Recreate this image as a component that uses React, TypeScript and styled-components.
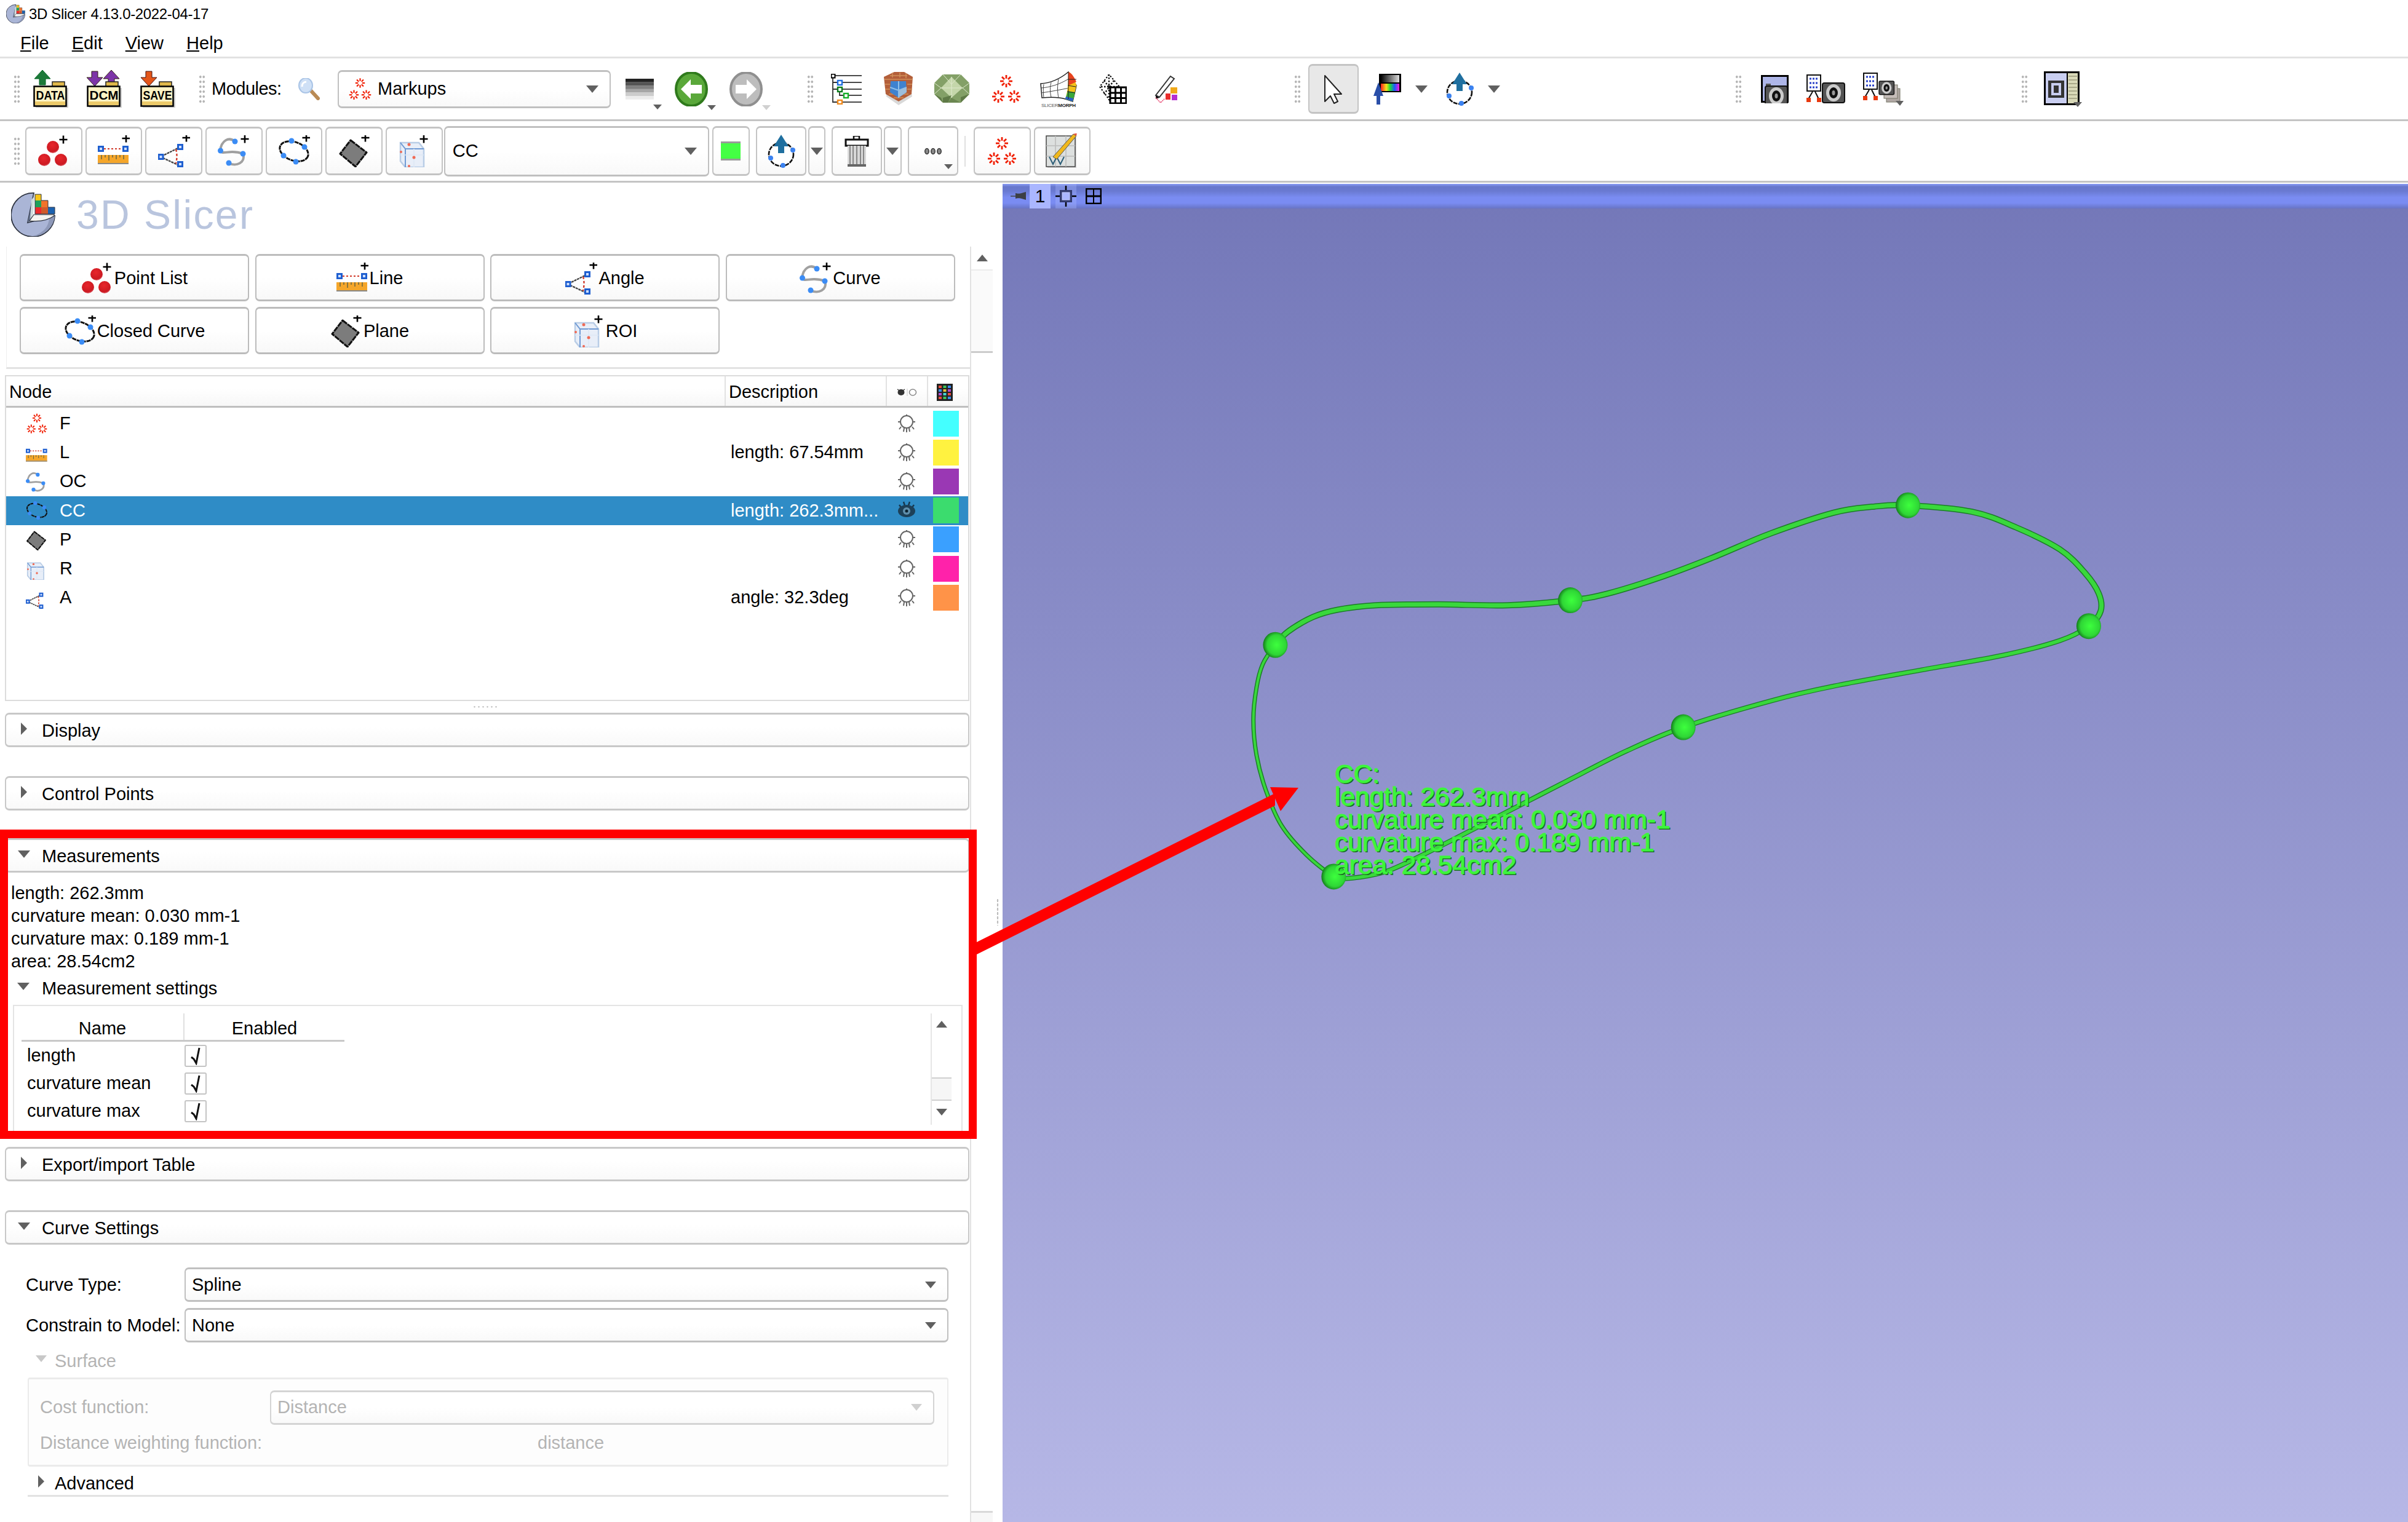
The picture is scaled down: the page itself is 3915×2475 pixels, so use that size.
import React from "react";
import styled, { createGlobalStyle } from "styled-components";

const GlobalStyle = createGlobalStyle`
  html, body { margin: 0; padding: 0; background: #fff; }
  * { box-sizing: border-box; }
  body { font-family: "Liberation Sans", Arial, sans-serif; font-size: 29px; color: #000; }
`;

const Page = styled.div`
  position: relative;
  width: 3915px;
  height: 2475px;
  overflow: hidden;
  display: flex;
  flex-direction: column;
  background: #fff;
`;

const TitleBar = styled.div`
  height: 45px;
  padding-left: 10px;
  display: flex;
  align-items: center;
  gap: 6px;
  font-size: 24px;
  letter-spacing: -0.35px;
`;

const MenuBar = styled.div`
  height: 50px;
  padding: 3px 0 0 33px;
  display: flex;
  align-items: center;
  gap: 37px;
  border-bottom: 3px solid #e2e2e2;
`;

const Toolbar = styled.div<{ $h: number }>`
  height: ${(p) => p.$h}px;
  flex: none;
  padding-left: 22px;
  display: flex;
  align-items: center;
  border-bottom: 3px solid #c4c4c4;
`;

const Grip = styled.div<{ $ml?: number }>`
  width: 11px;
  height: 48px;
  flex: none;
  margin-left: ${(p) => p.$ml ?? 0}px;
  background-image: radial-gradient(#b4b4b4 1.4px, transparent 1.8px);
  background-size: 5.5px 8px;
`;

const Slot = styled.div<{ $ml?: number }>`
  position: relative;
  flex: none;
  display: flex;
  align-items: center;
  margin-left: ${(p) => p.$ml ?? 0}px;
`;

const ModulesLabel = styled.span`
  width: 112px;
  margin-left: 10px;
  flex: none;
  white-space: nowrap;
  letter-spacing: -0.5px;
`;

const Tri = styled.span<{ $dir?: "down" | "right"; $color?: string; $size?: number }>`
  display: inline-block;
  flex: none;
  width: 0;
  height: 0;
  ${(p) => {
    const s = p.$size ?? 10;
    const c = p.$color ?? "#606060";
    return p.$dir === "right"
      ? `border-top: ${s}px solid transparent; border-bottom: ${s}px solid transparent; border-left: ${s}px solid ${c};`
      : `border-left: ${s}px solid transparent; border-right: ${s}px solid transparent; border-top: ${Math.round(s * 1.2)}px solid ${c};`;
  }}
`;

const CornerTri = styled(Tri)<{ $low?: number }>`
  position: absolute;
  right: -13px;
  bottom: ${(p) => -(p.$low ?? 6)}px;
`;

const Combo = styled.div<{ $w?: number; $h?: number; $off?: boolean; $ml?: number; $pad?: number }>`
  flex: none;
  width: ${(p) => (p.$w ? `${p.$w}px` : "100%")};
  height: ${(p) => p.$h ?? 56}px;
  margin-left: ${(p) => p.$ml ?? 0}px;
  padding: 0 18px 0 ${(p) => p.$pad ?? 10}px;
  display: flex;
  align-items: center;
  justify-content: space-between;
  border: 2px solid ${(p) => (p.$off ? "#d4d4d4" : "#c0c0c0")};
  border-top-width: 3px;
  border-bottom-width: 3px;
  border-radius: 7px;
  background: linear-gradient(#fff 50%, #f9f9f9);
  color: ${(p) => (p.$off ? "#b4b4b4" : "#000")};
`;

const ComboValue = styled.span`
  display: flex;
  align-items: center;
  gap: 10px;
`;

const ToolButton = styled.div<{ $w?: number; $h?: number; $ml?: number; $on?: boolean }>`
  position: relative;
  flex: none;
  width: ${(p) => p.$w ?? 92.7}px;
  height: ${(p) => p.$h ?? 79}px;
  margin-left: ${(p) => p.$ml ?? 5}px;
  display: flex;
  align-items: center;
  justify-content: center;
  border: 2px solid #c4c4c4;
  border-top-width: 3px;
  border-bottom-width: 3px;
  border-radius: 7px;
  background: ${(p) => (p.$on ? "#e8e8e8" : "linear-gradient(#fff 50%, #f8f8f8)")};
`;

const ButtonCornerTri = styled(Tri)`
  position: absolute;
  right: 7px;
  bottom: 8px;
`;

const ColorChip = styled.div`
  width: 32px;
  height: 31px;
  background: #44ff44;
  border-top: 3px solid #999;
  border-bottom: 3px solid #999;
`;

const Separator = styled.div`
  width: 2px;
  height: 50px;
  margin-left: 10px;
  flex: none;
  background: #e0e0e0;
`;

const Body = styled.div`
  flex: 1;
  display: flex;
  min-height: 0;
`;

const Panel = styled.div`
  width: 1630px;
  flex: none;
  display: flex;
  flex-direction: column;
`;

const LogoRow = styled.div`
  height: 104px;
  flex: none;
  padding: 0 0 0 18px;
  display: flex;
  align-items: center;
  gap: 34px;
  color: #b9c5de;
  font-size: 66px;
  letter-spacing: 2.4px;
`;

const ScrollWrap = styled.div`
  flex: 1;
  display: flex;
  min-height: 0;
`;

const PanelContent = styled.div`
  width: 1579px;
  flex: none;
  border-right: 2px solid #e2e2e2;
`;

const ButtonBox = styled.div`
  margin-left: 10px;
  padding: 12px 0 21px 21px;
  display: grid;
  grid-template-columns: repeat(4, 373px);
  grid-auto-rows: 77px;
  gap: 9px 9.5px;
  border-left: 1px solid #eee;
  border-bottom: 3px solid #e2e2e2;
`;

const CreateButton = styled.div`
  display: flex;
  align-items: center;
  justify-content: center;
  gap: 2px;
  white-space: nowrap;
  padding-top: 2px;
  border: 2px solid #bcbcbc;
  border-top-width: 3px;
  border-bottom-width: 3px;
  border-radius: 7px;
  background: linear-gradient(#fff 50%, #f8f8f8);
`;

const Tree = styled.div`
  margin: 10px 0 0 8px;
  width: 1568px;
  height: 530px;
  border: 2px solid #dcdcdc;
`;

const TreeHead = styled.div`
  height: 51px;
  margin-bottom: 2px;
  display: grid;
  grid-template-columns: 1168px 262px 67px 1fr;
  border-bottom: 3px solid #bfbfbf;
  background: linear-gradient(#fff 40%, #f7f7f7);
`;

const HeadCell = styled.div<{ $center?: boolean; $pr?: number }>`
  display: flex;
  align-items: center;
  padding-top: 3px;
  padding-left: ${(p) => (p.$center ? 0 : 5)}px;
  padding-right: ${(p) => p.$pr ?? 0}px;
  justify-content: ${(p) => (p.$center ? "center" : "flex-start")};
  & + & { border-left: 2px solid #e2e2e2; }
`;

const NodeRow = styled.div<{ $on?: boolean }>`
  height: 47.2px;
  display: grid;
  grid-template-columns: 1168px 262px 67px 1fr;
  align-items: center;
  background: ${(p) => (p.$on ? "#2f8cc6" : "transparent")};
  color: ${(p) => (p.$on ? "#fff" : "#000")};
`;

const NodeName = styled.div`
  padding-left: 30px;
  display: flex;
  align-items: center;
  gap: 17px;
`;

const NodeIcon = styled.span`
  width: 40px;
  height: 40px;
  display: flex;
  align-items: center;
  justify-content: center;
`;

const NodeDesc = styled.div`
  padding-left: 10px;
  white-space: nowrap;
`;

const EyeCell = styled.div`
  display: flex;
  justify-content: center;
`;

const Swatch = styled.div<{ $color: string }>`
  width: 42px;
  height: 42px;
  margin-left: 10px;
  background: ${(p) => p.$color};
`;

const SplitHandle = styled.div`
  height: 19px;
  display: flex;
  justify-content: center;
  align-items: center;
  &::after {
    content: "";
    width: 42px;
    height: 5px;
    background-image: radial-gradient(#b4b4b4 1.2px, transparent 1.6px);
    background-size: 7px 5px;
  }
`;

const SectionHead = styled.div<{ $mt?: number; $h?: number }>`
  width: 1568px;
  height: ${(p) => p.$h ?? 56}px;
  margin: ${(p) => p.$mt ?? 0}px 0 0 8px;
  padding-top: 3px;
  display: flex;
  align-items: center;
  border: 2px solid #c8c8c8;
  border-top-width: 3px;
  border-bottom-width: 3px;
  border-radius: 7px;
  background: linear-gradient(#fff 40%, #f9f9f9);
`;

const ArrowSlot = styled.span<{ $w?: number }>`
  width: ${(p) => p.$w ?? 58}px;
  padding-bottom: 7px;
  flex: none;
  display: flex;
  justify-content: center;
`;

const MeasureBody = styled.div`
  height: 446px;
`;

const MeasureLines = styled.div`
  padding: 15px 0 0 18px;
  line-height: 37px;
`;

const SubHead = styled.div<{ $ml?: number; $w?: number; $off?: boolean; $mt?: number }>`
  height: 40px;
  margin: ${(p) => p.$mt ?? 5}px 0 0 ${(p) => p.$ml ?? 8}px;
  width: ${(p) => (p.$w ? `${p.$w}px` : "auto")};
  display: flex;
  align-items: center;
  color: ${(p) => (p.$off ? "#b4b4b4" : "#000")};
`;

const SettingsBox = styled.div`
  margin: 7px 0 0 21px;
  width: 1544px;
  height: 215px;
  padding: 12px 16px 0 12px;
  display: flex;
  justify-content: space-between;
  border: 2px solid #e4e4e4;
  border-bottom: none;
`;

const Table = styled.div`
  width: 525px;
`;

const TableHead = styled.div`
  height: 46px;
  display: grid;
  grid-template-columns: 263px 262px;
  border-bottom: 3px solid #c8c8c8;
`;

const TableHeadCell = styled.span`
  display: flex;
  align-items: center;
  justify-content: center;
  padding-top: 6px;
  & + & { border-left: 2px solid #e0e0e0; }
`;

const TableRow = styled.div`
  height: 45px;
  display: grid;
  grid-template-columns: 256px 1fr;
  align-items: center;
  padding-left: 9px;
`;

const CheckBox = styled.span`
  width: 36px;
  height: 36px;
  display: flex;
  align-items: center;
  justify-content: center;
  border: 2px solid #c4c4c4;
  border-radius: 3px;
  background: #fff;
`;

const MiniBar = styled.div`
  width: 34px;
  height: 181px;
  display: flex;
  flex-direction: column;
  align-items: center;
  border-left: 2px solid #e6e6e6;
`;

const BarButton = styled.div<{ $h: number }>`
  height: ${(p) => p.$h}px;
  width: 100%;
  flex: none;
  display: flex;
  align-items: center;
  justify-content: center;
`;

const UpTri = styled(Tri)`
  transform: rotate(180deg);
`;

const MiniThumb = styled.div`
  width: 100%;
  height: 38px;
  flex: none;
  background: #f6f6f6;
  border-top: 2px solid #d0d0d0;
  border-bottom: 2px solid #d0d0d0;
`;

const FormGrid = styled.div<{ $mt: number; $ml: number; $col: number; $w: number }>`
  margin: ${(p) => p.$mt}px 0 0 ${(p) => p.$ml}px;
  width: ${(p) => p.$w}px;
  display: grid;
  grid-template-columns: ${(p) => p.$col}px 1fr;
  align-items: center;
  gap: 10px 0;
  white-space: nowrap;
`;

const SurfaceBox = styled.div`
  margin: 7px 0 0 45px;
  width: 1497px;
  height: 145px;
  padding-top: 18px;
  border: 2px solid #ebebeb;
  border-top-width: 3px;
  border-bottom-width: 3px;
  border-radius: 4px;
  background: #fdfdfd;
  color: #b4b4b4;
`;

const SurfaceRow = styled.div<{ $h?: number }>`
  height: ${(p) => p.$h ?? 55}px;
  padding-left: 18px;
  display: flex;
  align-items: center;
  white-space: nowrap;
`;

const SurfaceLabel = styled.span`
  width: 374px;
  flex: none;
`;

const WeightLabel = styled.span`
  width: 809px;
  flex: none;
`;

const AdvancedRow = styled(SubHead)`
  border-bottom: 3px solid #e2e2e2;
  margin-top: 9px;
`;

const MainBar = styled.div`
  width: 35px;
  flex: none;
  display: flex;
  flex-direction: column;
`;

const MainThumb = styled.div`
  height: 136px;
  flex: none;
  background: #fafafa;
  border-top: 2px solid #ececec;
  border-bottom: 3px solid #cccccc;
`;

const MainBarGap = styled.div`
  flex: 1;
`;

const MainBarEnd = styled.div`
  height: 18px;
  flex: none;
  background: #f7f7f7;
  border-top: 3px solid #d8d8d8;
`;

const SplitStrip = styled.div`
  flex: 1;
  padding-top: 90px;
  display: flex;
  justify-content: center;
  align-items: center;
  &::after {
    content: "";
    width: 4px;
    height: 44px;
    background-image: radial-gradient(#bdbdbd 1.2px, transparent 1.6px);
    background-size: 4px 7px;
  }
`;

const Viewer = styled.div`
  position: relative;
  flex: 1;
  margin-top: 2px;
  display: flex;
  flex-direction: column;
  background: linear-gradient(#7377b8 0%, #b6b7e6 100%);
`;

const ViewerBar = styled.div`
  height: 40px;
  flex: none;
  display: flex;
  align-items: stretch;
  padding-left: 8px;
  background: linear-gradient(#8b9cf6 0, #6777cb 12%, #6a7ad2 30%, #7a8cf2 55%, #7a8cf2 78%, #6874c4 100%);
`;

const PinBox = styled.div`
  width: 36px;
  display: flex;
  align-items: center;
  justify-content: center;
`;

const ViewNumber = styled.div`
  width: 34px;
  display: flex;
  align-items: center;
  justify-content: center;
  background: #aab6ff;
  font-size: 30px;
`;

const ViewIcon = styled.div<{ $ml: number; $w: number; $tint?: boolean }>`
  width: ${(p) => p.$w}px;
  margin-left: ${(p) => p.$ml}px;
  display: flex;
  align-items: center;
  justify-content: center;
  background: ${(p) => (p.$tint ? "rgba(170, 182, 255, 0.35)" : "transparent")};
`;

const SceneLayer = styled.svg`
  position: absolute;
  left: 0;
  top: 0;
`;

const SceneLabel = styled.div`
  position: absolute;
  left: 540px;
  top: 941px;
  font-size: 42.5px;
  line-height: 37px;
  white-space: nowrap;
  color: #3cf53c;
  -webkit-text-stroke: 1.2px #3cf53c;
  text-shadow: 2px 2px 0 #1c6a22;
`;

const Callout = styled.div`
  position: absolute;
  left: 0;
  top: 1349px;
  width: 1588px;
  height: 503px;
  border: solid #ff0000;
  border-width: 14px 13px 13px 13px;
`;

const CalloutArrow = styled.svg`
  position: absolute;
  left: 0;
  top: 0;
  pointer-events: none;
`;

/* ---------- drawings ---------- */

const FONT = "Liberation Sans, Arial, sans-serif";

function arrowPts(cx: number, y0: number, y1: number, up: boolean, hw = 13, sw = 5) {
  const h = 14;
  return up
    ? `${cx},${y0} ${cx + hw},${y0 + h} ${cx + sw},${y0 + h} ${cx + sw},${y1} ${cx - sw},${y1} ${cx - sw},${y0 + h} ${cx - hw},${y0 + h}`
    : `${cx},${y1} ${cx + hw},${y1 - h} ${cx + sw},${y1 - h} ${cx + sw},${y0} ${cx - sw},${y0} ${cx - sw},${y1 - h} ${cx - hw},${y1 - h}`;
}

function Folder({ label, children }: { label: string; children: React.ReactNode }) {
  return (
    <svg width="58" height="62" viewBox="0 0 58 62">
      {children}
      <rect x="31" y="19" width="20" height="9" fill="#e0b84a" stroke="#222" strokeWidth="1.5" />
      <rect x="4" y="29" width="53" height="32" fill="#000" opacity=".2" />
      <rect x="1.5" y="26.5" width="52" height="32" fill="#fdf3c4" stroke="#000" strokeWidth="2.5" />
      <rect x="3" y="51" width="49" height="6" fill="#ecca6a" />
      <text x="28" y="48" textAnchor="middle" fontFamily={FONT} fontSize="20.5" fontWeight="700" textLength="47" lengthAdjust="spacingAndGlyphs">{label}</text>
    </svg>
  );
}

const Magnifier = () => (
  <svg width="36" height="36" viewBox="0 0 36 36">
    <path d="M21 21l11 12" stroke="#b98a55" strokeWidth="6" strokeLinecap="round" />
    <ellipse cx="12" cy="12" rx="11" ry="12" fill="#cfe0f6" stroke="#a9c4e6" strokeWidth="2" />
    <path d="M6 14c0-5 3-8 7-8" stroke="#fff" strokeWidth="3" fill="none" />
  </svg>
);

function Burst({ x, y, r }: { x: number; y: number; r: number }) {
  const spokes = [0, 45, 90, 135, 180, 225, 270, 315];
  return (
    <g stroke="#f01c00" strokeWidth={r / 3.6}>
      {spokes.map((a) => {
        const c = Math.cos((a * Math.PI) / 180);
        const s = Math.sin((a * Math.PI) / 180);
        return <line key={a} x1={x + c * r * 0.42} y1={y + s * r * 0.42} x2={x + c * r} y2={y + s * r} />;
      })}
    </g>
  );
}

function Fiducials({ w = 48, h = 48 }: { w?: number; h?: number }) {
  return (
    <svg width={w} height={h} viewBox="0 0 48 48">
      <Burst x={24} y={11} r={10} />
      <Burst x={11} y={36} r={10} />
      <Burst x={37} y={36} r={10} />
    </svg>
  );
}

const Gradient = () => (
  <svg width="46" height="34" viewBox="0 0 46 34">
    {["#222", "#555", "#808080", "#a6a6a6", "#cccccc", "#ececec"].map((c, i) => (
      <rect key={c} x="0" y={i * 5.6} width="46" height="5.7" fill={c} />
    ))}
  </svg>
);

function NavArrow({ back, on }: { back?: boolean; on?: boolean }) {
  const a = on ? "#5aa83a" : "#bdbdbd";
  const b = on ? "#2f7a1c" : "#8f8f8f";
  return (
    <svg width="54" height="56" viewBox="0 0 54 56">
      <ellipse cx="27" cy="28" rx="25" ry="27" fill={a} stroke={b} strokeWidth="4" />
      <polygon
        points={back ? "10,28 26,12 26,21 44,21 44,35 26,35 26,44" : "44,28 28,12 28,21 10,21 10,35 28,35 28,44"}
        fill="#fff"
      />
    </svg>
  );
}

const TreeIcon = () => (
  <svg width="50" height="50" viewBox="0 0 50 50">
    <path d="M3 4v42h11M3 14h11M3 25h11M14 25v10h10" stroke="#333" strokeWidth="1.8" fill="none" />
    <path d="M7 3h43M19 14h31M19 25h31M29 35h21M19 46h31" stroke="#4a4a4a" strokeWidth="2.2" />
    <rect x="0.5" y="0.5" width="6" height="6" fill="#fff" stroke="#000" strokeWidth="2" />
    <rect x="11" y="11" width="7" height="7" fill="#fff" stroke="#1f6fe0" strokeWidth="2.4" />
    <rect x="11" y="22" width="7" height="7" fill="#fff" stroke="#0a7a1a" strokeWidth="2.4" />
    <rect x="21" y="32" width="7" height="7" fill="#fff" stroke="#17b02a" strokeWidth="2.4" />
    <rect x="11" y="43" width="7" height="6" fill="#fff" stroke="#f0891c" strokeWidth="2.4" />
  </svg>
);

const Shield = () => (
  <svg width="49" height="56" viewBox="0 0 49 56">
    <polygon points="6,14 42,14 46,40 24,54 4,40" fill="#000" opacity=".15" />
    <polygon points="17,0 33,0 47,8 45,36 24,48 3,36 0,8" fill="#b35f3a" />
    <path d="M1 12h46M2 20h8M38 20h8M2 28h8M38 28h8M10 6h28M8 36h32M16 42h16M14 1v8M26 1v8M36 2v8" stroke="#d2915a" strokeWidth="1.5" />
    <polygon points="11,15 36,15 37,33 24,42 10,33" fill="#3f82cf" />
    <path d="M24 15v27M10 25l14 5 13-5" stroke="#8fbfe8" strokeWidth="2" fill="none" />
    <polygon points="25,30 37,25 37,33 25,41" fill="#9dbedc" />
  </svg>
);

const Rock = () => (
  <svg width="57" height="47" viewBox="0 0 57 47">
    <polygon points="14,0 43,0 57,14 57,32 43,46 14,46 0,32 0,14" fill="#83a067" />
    <polygon points="28,4 46,22 28,38 11,22" fill="#c4d6aa" />
    <path d="M14 0l14 16L43 0M0 14l11 8L0 32M57 14l-11 8 11 10M28 4v34M11 22h35" stroke="#dfe9cd" strokeWidth="1" fill="none" />
    <polygon points="0,32 11,38 14,46" fill="#5f7a47" />
    <polygon points="14,38 28,34 22,46 14,46" fill="#5f7a47" />
    <polygon points="28,38 43,46 22,46" fill="#6b8751" />
    <polygon points="43,37 57,32 43,46" fill="#5f7a47" />
  </svg>
);

const Morph = () => (
  <svg width="61" height="60" viewBox="0 0 61 60">
    <path d="M1 21C18 20 34 12 46 2L59 24 53 50 41 46C28 42 14 43 3 44z" fill="#fff" stroke="#222" strokeWidth="1.5" />
    <path d="M2 28c14-1 30-6 43-14M2 36c15-2 30-5 46-8M6 44c-1-8-1-16 0-22M18 43c-2-8-2-17 0-24M30 44c-2-10-2-20 0-30" stroke="#444" strokeWidth="1" fill="none" />
    <path d="M46 2c6 2 10 10 13 22L53 50 41 46c4-12 5-26 5-44z" fill="#f5c21a" />
    <path d="M46 2c6 2 10 10 13 16l-13 6V2z" fill="#e8431f" />
    <path d="M45 33l12 2-4 15-12-4z" fill="#3aa83a" />
    <path d="M41 46l12 4 1-5-12-3z" fill="#2a5fc8" />
    <path d="M46 2v44M45 14l14 0M45 24l13 2M44 34l13 2" stroke="#222" strokeWidth="1" fill="none" />
    <text x="30" y="59" textAnchor="middle" fontFamily={FONT} fontSize="8" fill="#555" textLength="56">
      SLICER<tspan fontWeight="700" fill="#222">MORPH</tspan>
    </text>
  </svg>
);

const Mesh = () => (
  <svg width="45" height="48" viewBox="0 0 45 48">
    <path d="M16 0L1 20l16 22 16-22z" fill="#fff" stroke="#000" strokeWidth="2" strokeDasharray="2.5 2.5" />
    <path d="M8 10l17 22M24 10L8 32M3 20h28M16 0v42" stroke="#111" strokeWidth="2.4" strokeDasharray="2.5 2.5" />
    <rect x="18" y="21" width="26" height="26" fill="#fff" stroke="#000" strokeWidth="3" />
    <path d="M26.5 21v26M35.5 21v26M18 30h26M18 38.5h26" stroke="#000" strokeWidth="3" />
  </svg>
);

const Paint = () => (
  <svg width="40" height="46" viewBox="0 0 40 46">
    <path d="M3 33L27 2l6 4L9 36z" fill="#fff" stroke="#333" strokeWidth="2" />
    <path d="M3 33l6 4-6 2z" fill="#111" />
    <rect x="27" y="20" width="11" height="10" fill="#f0a91a" />
    <rect x="19" y="30" width="8" height="10" fill="#ea2c2c" />
    <rect x="29" y="32" width="9" height="9" fill="#b52fd0" />
    <path d="M3 37l8 8 7-7" stroke="#e8456f" strokeWidth="1.5" fill="none" strokeDasharray="2 1" />
  </svg>
);

const Cursor = () => (
  <svg width="34" height="48" viewBox="0 0 34 48">
    <path d="M3 2v42l9-9 6 12 6-3-6-12h12z" fill="#fff" stroke="#222" strokeWidth="2" strokeLinejoin="round" />
  </svg>
);

const Colormap = () => (
  <svg width="45" height="50" viewBox="0 0 45 50">
    <defs>
      <linearGradient id="cmGrey" x1="0" x2="1"><stop offset="0" stopColor="#000" /><stop offset="1" stopColor="#ddd" /></linearGradient>
      <linearGradient id="cmRainbow" x1="0" x2="1">
        <stop offset="0" stopColor="#ff2020" /><stop offset=".3" stopColor="#f5e51a" /><stop offset=".5" stopColor="#1edb3a" />
        <stop offset=".75" stopColor="#1a5cff" /><stop offset="1" stopColor="#ff19e0" />
      </linearGradient>
    </defs>
    <rect x="9" y="0" width="36" height="30" fill="#000" />
    <rect x="12" y="2" width="30" height="12" fill="url(#cmGrey)" />
    <rect x="12" y="16" width="30" height="12" fill="url(#cmRainbow)" />
    <polygon points="8,14 16,36 11,36 11,50 5,50 5,36 0,36" fill="#2a4fa8" />
  </svg>
);

const ArrowLoop = () => (
  <svg width="48" height="54" viewBox="0 0 48 54">
    <ellipse cx="24" cy="32" rx="20" ry="19" fill="#fff" stroke="#111" strokeWidth="2.6" strokeDasharray="7 1.5" />
    <g fill="#3b82f0">
      <circle cx="43" cy="25" r="4" />
      <circle cx="7" cy="38" r="4" />
      <circle cx="27" cy="50" r="4" />
    </g>
    <polygon points="24,0 36,19 29,19 29,30 19,30 19,19 12,19" fill="#1f6f9f" />
  </svg>
);

const Camera = ({ x, y, s = 1 }: { x: number; y: number; s?: number }) => (
  <g transform={`translate(${x} ${y}) scale(${s})`}>
    <rect x="0" y="0" width="36" height="32" rx="3" fill="#555" stroke="#111" strokeWidth="2" />
    <ellipse cx="18" cy="16" rx="12" ry="14" fill="#ccc" />
    <ellipse cx="18" cy="16" rx="7" ry="9" fill="#111" />
    <ellipse cx="18" cy="16" rx="2.5" ry="4" fill="#999" />
  </g>
);

const Snapshot = () => (
  <svg width="45" height="46" viewBox="0 0 45 46">
    <rect x="1.5" y="1.5" width="42" height="42" fill="#aeb6e8" stroke="#000" strokeWidth="3" />
    <rect x="8" y="14" width="8" height="6" fill="#555" />
    <Camera x={7} y={18} />
  </svg>
);

const SceneDoc = () => (
  <g>
    <rect x="1" y="1" width="22" height="26" fill="#fff" stroke="#111" strokeWidth="2" />
    <path d="M5 7h14M5 14h14M5 21h14" stroke="#2840c8" strokeWidth="3" strokeDasharray="3 2" />
    <path d="M10 28l-7 12M14 28l6 12" stroke="#111" strokeWidth="2" />
    <rect x="0" y="38" width="7" height="7" fill="#e8390f" />
    <rect x="17" y="38" width="7" height="7" fill="#e8390f" />
  </g>
);

const SceneCam = () => (
  <svg width="64" height="48" viewBox="0 0 64 48">
    <SceneDoc />
    <Camera x={26} y={14} />
  </svg>
);

const SceneStack = () => (
  <svg width="66" height="54" viewBox="0 0 66 54">
    <SceneDoc />
    <rect x="38" y="26" width="22" height="22" fill="#b0a8a4" stroke="#776" />
    <rect x="34" y="20" width="22" height="22" fill="#c4bcb8" stroke="#776" />
    <Camera x={26} y={14} s={0.68} />
    <polygon points="53,46 66,46 60,54" fill="#606060" />
  </svg>
);

const LayoutIcon = () => (
  <svg width="62" height="58" viewBox="0 0 62 58">
    <rect x="1.5" y="1.5" width="55" height="52" fill="#c9cef0" stroke="#000" strokeWidth="3" />
    <rect x="38" y="3" width="17" height="49" fill="#d9d9b8" />
    <path d="M38 2v52" stroke="#000" strokeWidth="2" />
    <path d="M40 8h14M40 14h14M40 20h14M40 26h14M40 32h14M40 38h14M40 44h14" stroke="#aaa98a" strokeWidth="2" />
    <rect x="7" y="15" width="26" height="28" fill="#333" />
    <rect x="12" y="19" width="16" height="20" fill="#c9cef0" />
    <rect x="16" y="23" width="8" height="12" fill="#333" />
    <polygon points="48,50 62,50 55,58" fill="#606060" />
  </svg>
);

const Trash = () => (
  <svg width="40" height="50" viewBox="0 0 40 50">
    <rect x="15" y="0" width="9" height="6" fill="none" stroke="#111" strokeWidth="2.5" />
    <rect x="2" y="6" width="36" height="10" fill="#fff" stroke="#111" strokeWidth="3" />
    <rect x="5" y="16" width="30" height="32" fill="#d8d8d8" />
    <path d="M9 16v30M14 16v30M20 16v30M26 16v30M31 16v30" stroke="#888" strokeWidth="2" />
    <rect x="5" y="46" width="30" height="4" fill="#666" />
  </svg>
);

const Dots = () => (
  <svg width="30" height="12" viewBox="0 0 30 12">
    {[5, 15, 25].map((x) => (
      <ellipse key={x} cx={x} cy="6" rx="3.2" ry="4.5" fill="#888" stroke="#333" strokeWidth="1.5" />
    ))}
  </svg>
);

const EditTable = () => (
  <svg width="54" height="58" viewBox="0 0 54 58">
    <rect x="3" y="6" width="47" height="50" fill="#000" opacity=".15" />
    <rect x="1" y="4" width="47" height="50" fill="#dde0df" stroke="#444" strokeWidth="1.5" />
    <path d="M16 4v50M33 4v50M1 20h47M1 37h47" stroke="#bbb" strokeWidth="1.5" />
    <path d="M6 38l6 12 6-12 6 12 6-12" stroke="#2d5e78" strokeWidth="2" fill="none" />
    <path d="M12 38L45 1l5 3-32 38z" fill="#f0b81c" stroke="#555" />
    <path d="M45 1l5 3 1-5z" fill="#e8573f" />
  </svg>
);

const Plus = ({ x, y }: { x: number; y: number }) => (
  <path d={`M${x - 6.5} ${y}h13M${x} ${y - 6.5}v13`} stroke="#000" strokeWidth="2.6" />
);

const NodeDot = ({ x, y }: { x: number; y: number }) => (
  <g>
    <rect x={x - 5} y={y - 5} width="10" height="10" fill="#1f5fd0" />
    <rect x={x - 2} y={y - 2} width="4" height="4" fill="#cfe0ff" />
  </g>
);

const BlueBead = ({ x, y }: { x: number; y: number }) => <circle cx={x} cy={y} r="4.5" fill="#3b8cf5" />;

type MarkupKind = "points" | "line" | "angle" | "curve" | "closed" | "plane" | "roi";

const PLUS_AT: Record<MarkupKind, number[]> = {
  points: [42, 7],
  line: [46, 5],
  angle: [46, 4],
  curve: [44, 6],
  closed: [46, 4],
  plane: [44, 4],
  roi: [42, 6],
};

function Markup({ kind, plus, size = 52 }: { kind: MarkupKind; plus?: boolean; size?: number }) {
  return (
    <svg width={size} height={size} viewBox="0 0 52 52" style={{ flex: "none" }}>
      <defs>
        <radialGradient id="ball" cx=".45" cy=".35" r=".7"><stop offset="0" stopColor="#e8262c" /><stop offset=".75" stopColor="#cc1a22" /><stop offset="1" stopColor="#e2707a" /></radialGradient>
      </defs>
      {kind === "points" && (
        <g fill="url(#ball)">
          <circle cx="25" cy="19" r="10" />
          <circle cx="11" cy="40" r="10" />
          <circle cx="38" cy="40" r="10" />
        </g>
      )}
      {kind === "line" && (
        <g>
          <rect x="0" y="32" width="50" height="15" fill="#f5a62a" />
          <rect x="0" y="45" width="50" height="2" fill="#888" />
          <path d="M6 32v7M12 32v4M18 32v9M24 32v4M30 32v7M36 32v4M42 32v7" stroke="#664" strokeWidth="1.5" />
          <path d="M10 22h30" stroke="#d0392a" strokeWidth="2.2" strokeDasharray="3 3" />
          <NodeDot x={5} y={22} />
          <NodeDot x={45} y={22} />
        </g>
      )}
      {kind === "angle" && (
        <g>
          <path d="M36 19L4 35l32 15" fill="none" stroke="#444" strokeWidth="2.4" strokeDasharray="4 1" />
          <path d="M29 23c2 6 2 15 0 23" fill="none" stroke="#d0392a" strokeWidth="2.4" strokeDasharray="4 3" />
          <NodeDot x={36} y={19} />
          <NodeDot x={4.5} y={35} />
          <NodeDot x={36} y={47} />
        </g>
      )}
      {kind === "curve" && (
        <g>
          <path d="M28 10C18 2 6 8 4 25c4 8 16-3 37 5 5 14-11 22-23 15" fill="none" stroke="#a0a0a0" strokeWidth="4" />
          <BlueBead x={28} y={10} />
          <BlueBead x={4.5} y={25} />
          <BlueBead x={41} y={30} />
          <BlueBead x={18} y={45} />
        </g>
      )}
      {kind === "closed" && (
        <g>
          <ellipse cx="26" cy="26" rx="24" ry="15" transform="rotate(20 26 26)" fill="none" stroke="#111" strokeWidth="3" strokeDasharray="7 1" />
          <BlueBead x={22} y={9} />
          <BlueBead x={43} y={19} />
          <BlueBead x={9} y={33} />
          <BlueBead x={29} y={43} />
        </g>
      )}
      {kind === "plane" && (
        <polygon points="20,8 46,28 28,51 3,30" fill="#7c7c7c" stroke="#111" strokeWidth="3" strokeLinejoin="round" strokeDasharray="9 1" />
      )}
      {kind === "roi" && (
        <g>
          <path d="M4 12h30l8 10v30H12l-8-10z" fill="#e8eef8" stroke="#b9cde6" strokeWidth="2.5" />
          <path d="M4 12l8 10h30M12 22v30" fill="none" stroke="#6f9ad4" strokeWidth="2" />
          <path d="M4 32h38M26 22v30" fill="none" stroke="#dde7f4" strokeWidth="1.5" />
          <g fill="#ef6a55">
            <circle cx="18" cy="15" r="2.5" />
            <circle cx="26" cy="36" r="2.5" />
            <circle cx="5" cy="27" r="2" />
            <circle cx="18" cy="50" r="2" />
          </g>
        </g>
      )}
      {plus && <Plus x={PLUS_AT[kind][0]} y={PLUS_AT[kind][1]} />}
    </svg>
  );
}

function Eye({ open }: { open?: boolean }) {
  if (open) {
    return (
      <svg width="34" height="30" viewBox="0 0 34 30">
        <path d="M5 6l3 4M12 1l2 6M22 1l-2 6M29 6l-3 4" stroke="#17384f" strokeWidth="2.5" />
        <ellipse cx="17" cy="16" rx="14" ry="10" fill="#1d4058" />
        <circle cx="17" cy="16" r="6" fill="#5f8eab" />
        <circle cx="17" cy="16" r="2.5" fill="#0c2231" />
      </svg>
    );
  }
  return (
    <svg width="34" height="30" viewBox="0 0 34 30">
      <circle cx="17" cy="12" r="10" fill="#fff" stroke="#666" strokeWidth="2" />
      <path d="M17 0v3M3 12h4M27 12h4M8 20l-3 4M13 22l-1 6M17 22v7M21 22l1 6M26 20l3 4" stroke="#666" strokeWidth="2" />
    </svg>
  );
}

const HeadEye = () => (
  <svg width="34" height="14" viewBox="0 0 34 14">
    <ellipse cx="7" cy="7" rx="5.5" ry="5" fill="#333" />
    <path d="M1 2l3 2M13 2l-3 2" stroke="#333" strokeWidth="1.5" />
    <path d="M17 1v12" stroke="#ccc" />
    <ellipse cx="26" cy="7" rx="5.5" ry="5" fill="#fff" stroke="#888" strokeWidth="1.5" />
  </svg>
);

const ColorGrid = () => (
  <svg width="26" height="28" viewBox="0 0 26 28">
    <rect width="26" height="28" fill="#222" />
    {[0, 1, 2, 3].map((r) =>
      [0, 1, 2].map((c) => (
        <rect
          key={`${r}-${c}`}
          x={3 + c * 7.5}
          y={3 + r * 6}
          width="5"
          height="4"
          fill={["#e74c3c", "#3cc45a", "#3a8bea", "#e8c13a", "#b04ad0", "#44d4d4"][(r * 2 + c) % 6]}
        />
      ))
    )}
  </svg>
);

const Check = () => (
  <svg width="20" height="30" viewBox="0 0 20 30">
    <path d="M3 17l4 3 4 7L16 2" fill="none" stroke="#111" strokeWidth="3" />
  </svg>
);

function SlicerLogo({ size }: { size: number }) {
  return (
    <svg width={size} height={size} viewBox="0 0 72 72" style={{ flex: "none" }}>
      <path d="M37 1A35.5 35.5 0 1 0 71 38L27 49z" fill="#aab5d6" stroke="#2d3340" strokeWidth="1.8" />
      <path d="M71 38A35.5 35.5 0 0 1 36 71C52 66 61 56 62 42z" fill="#8e99b9" />
      <path d="M37 2L27 49l6-4 4-40z" fill="#66738f" />
      <path d="M38 6l-2 29-5 9 2-32z" fill="#cfdcdc" />
      <path d="M30 46l7-10h33l0 2c-10 7-24 10-40 8z" fill="#f4f4f0" stroke="#2d3340" strokeWidth="1.2" />
      <rect x="39" y="3" width="10" height="10" fill="#f8c617" />
      <rect x="39" y="13" width="10" height="11" fill="#1fa05a" />
      <rect x="49" y="13" width="11" height="11" fill="#f2732a" />
      <rect x="39" y="24" width="10" height="11" fill="#ee2a2a" />
      <rect x="49" y="24" width="11" height="11" fill="#cf5a2a" />
      <rect x="60" y="24" width="11" height="11" fill="#1c62b0" />
      <path d="M39 3h10v10h11v11h11v11H39z" fill="none" stroke="#2d3340" strokeWidth="1" />
    </svg>
  );
}

const Pin = () => (
  <svg width="26" height="16" viewBox="0 0 26 16">
    <path d="M0 8h8" stroke="#444" strokeWidth="1.5" />
    <path d="M8 3c2 1 8 1 10 0l7-2v13l-7-2c-2-1-8-1-10 0z" fill="#3c3f45" />
  </svg>
);

const Crosshair = () => (
  <svg width="34" height="34" viewBox="0 0 34 34">
    <path d="M17 0v34M0 17h34" stroke="#000" strokeWidth="2.5" />
    <rect x="7" y="7" width="20" height="20" fill="#333b6e" />
    <rect x="11" y="11" width="12" height="12" fill="#aab6ff" stroke="#c8d0ff" />
  </svg>
);

const Quad = () => (
  <svg width="26" height="26" viewBox="0 0 26 26">
    <rect x="1.2" y="1.2" width="23.6" height="23.6" fill="none" stroke="#000" strokeWidth="2.4" />
    <path d="M13 1v24" stroke="#000" strokeWidth="2" />
    <path d="M1 13h24" stroke="#000" strokeWidth="3" />
  </svg>
);

/* ---------- 3D view ---------- */

const toPage = (p: number[]) => [1900 + p[0] * 1.0204, 750 + p[1] * 0.478];

// traced from the view, nodes are listed as they come along the loop
const LOOP = [
  [170, 625], [190, 580], [230, 530], [270, 505], [330, 490], [430, 487], [540, 490], [640, 473],
  [700, 450], [790, 390], [870, 325], [960, 245], [1060, 175], [1120, 155], [1178, 150],
  [1280, 172], [1350, 225], [1420, 300], [1460, 380], [1482, 450], [1485, 510], [1466, 561],
  [1420, 610], [1330, 660], [1200, 710], [1060, 765], [960, 815], [820, 905],
  [730, 985], [660, 1060], [560, 1170], [460, 1280], [370, 1375], [330, 1405], [280, 1420], [263, 1413],
  [220, 1340], [180, 1240], [155, 1120], [140, 1000], [135, 880], [140, 770], [150, 690],
].map(toPage);

const NODES = [[170, 625], [640, 473], [1178, 150], [1466, 561], [820, 905], [263, 1413]].map(toPage);

function loopPath(from: number, to: number) {
  const n = LOOP.length;
  const at = (i: number) => LOOP[((i % n) + n) % n];
  let d = `M${at(from)[0].toFixed(1)} ${at(from)[1].toFixed(1)}`;
  for (let i = from; i < to; i++) {
    const [p0, p1, p2, p3] = [at(i - 1), at(i), at(i + 1), at(i + 2)];
    const c1 = [p1[0] + (p2[0] - p0[0]) / 6, p1[1] + (p2[1] - p0[1]) / 6];
    const c2 = [p2[0] - (p3[0] - p1[0]) / 6, p2[1] - (p3[1] - p1[1]) / 6];
    d += `C${c1[0].toFixed(1)} ${c1[1].toFixed(1)} ${c2[0].toFixed(1)} ${c2[1].toFixed(1)} ${p2[0].toFixed(1)} ${p2[1].toFixed(1)}`;
  }
  return d;
}

function CurveScene() {
  const runs = [
    { d: loopPath(0, 21), outer: 10, inner: 7 },
    { d: loopPath(21, 35), outer: 8, inner: 5.5 },
    { d: loopPath(35, 43), outer: 7, inner: 4 },
  ];
  return (
    <SceneLayer width="2285" height="2176" viewBox="1630 299 2285 2176">
      <defs>
        <radialGradient id="nodeBall" cx=".55" cy=".5" r=".55">
          <stop offset="0" stopColor="#3dff3d" />
          <stop offset=".7" stopColor="#2fd636" />
          <stop offset="1" stopColor="#137a1c" />
        </radialGradient>
      </defs>
      {runs.map((r) => (
        <g key={r.d} fill="none" strokeLinecap="round">
          <path d={r.d} stroke="#1c7d27" strokeWidth={r.outer} />
          <path d={r.d} stroke="#39d83c" strokeWidth={r.inner} />
        </g>
      ))}
      {NODES.map((p) => (
        <ellipse key={p[0]} cx={p[0]} cy={p[1]} rx="20" ry="21" fill="url(#nodeBall)" />
      ))}
    </SceneLayer>
  );
}

const NODES_LIST: { kind: MarkupKind | "fid"; name: string; desc: string; color: string; on?: boolean }[] = [
  { kind: "fid", name: "F", desc: "", color: "#44ffff" },
  { kind: "line", name: "L", desc: "length: 67.54mm", color: "#fff240" },
  { kind: "curve", name: "OC", desc: "", color: "#9a38b4" },
  { kind: "closed", name: "CC", desc: "length: 262.3mm...", color: "#3bdc6e", on: true },
  { kind: "plane", name: "P", desc: "", color: "#3aa0ff" },
  { kind: "roi", name: "R", desc: "", color: "#ff22aa" },
  { kind: "angle", name: "A", desc: "angle: 32.3deg", color: "#ff9348" },
];

const CREATE_BUTTONS: { kind: MarkupKind; label: string }[] = [
  { kind: "points", label: "Point List" },
  { kind: "line", label: "Line" },
  { kind: "angle", label: "Angle" },
  { kind: "curve", label: "Curve" },
  { kind: "closed", label: "Closed Curve" },
  { kind: "plane", label: "Plane" },
  { kind: "roi", label: "ROI" },
];

function MenuItem({ text }: { text: string }) {
  return (
    <span>
      <u>{text[0]}</u>
      {text.slice(1)}
    </span>
  );
}

export default function App() {
  return (
    <Page>
      <GlobalStyle />
      <TitleBar>
        <SlicerLogo size={31} />
        3D Slicer 4.13.0-2022-04-17
      </TitleBar>
      <MenuBar>
        <MenuItem text="File" />
        <MenuItem text="Edit" />
        <MenuItem text="View" />
        <MenuItem text="Help" />
      </MenuBar>

      <Toolbar $h={102}>
        <Grip />
        <Slot $ml={21}>
          <Folder label="DATA">
            <polygon points={arrowPts(15, 0, 24, true)} fill="#1d7a3a" stroke="#062" />
          </Folder>
        </Slot>
        <Slot $ml={29}>
          <Folder label="DCM">
            <polygon points={arrowPts(13, 2, 26, false)} fill="#7d35a8" stroke="#321" />
            <polygon points={arrowPts(40, 0, 24, true)} fill="#7d35a8" stroke="#321" />
          </Folder>
        </Slot>
        <Slot $ml={29}>
          <Folder label="SAVE">
            <polygon points={arrowPts(14, 2, 26, false)} fill="#e4561a" stroke="#411" />
          </Folder>
        </Slot>
        <Grip $ml={37} />
        <ModulesLabel>Modules:</ModulesLabel>
        <Slot $ml={29}>
          <Magnifier />
        </Slot>
        <Combo $w={444} $h={62} $ml={28} $pad={16}>
          <ComboValue>
            <Fiducials w={37} h={40} />
            Markups
          </ComboValue>
          <Tri />
        </Combo>
        <Slot $ml={24}>
          <Gradient />
          <CornerTri $size={7} $low={16} />
        </Slot>
        <Slot $ml={34}>
          <NavArrow back on />
          <CornerTri $size={7} />
        </Slot>
        <Slot $ml={35}>
          <NavArrow />
          <CornerTri $size={7} $color="#d0d0d0" />
        </Slot>
        <Grip $ml={72} />
        <Slot $ml={28}>
          <TreeIcon />
        </Slot>
        <Slot $ml={36}>
          <Shield />
        </Slot>
        <Slot $ml={33}>
          <Rock />
        </Slot>
        <Slot $ml={36}>
          <Fiducials />
        </Slot>
        <Slot $ml={31}>
          <Morph />
        </Slot>
        <Slot $ml={35}>
          <Mesh />
        </Slot>
        <Slot $ml={44}>
          <Paint />
        </Slot>
        <Grip $ml={188} />
        <ToolButton $w={82} $h={81} $ml={12} $on>
          <Cursor />
        </ToolButton>
        <Slot $ml={24}>
          <Colormap />
        </Slot>
        <Slot $ml={23}>
          <Tri />
        </Slot>
        <Slot $ml={28}>
          <ArrowLoop />
        </Slot>
        <Slot $ml={22}>
          <Tri />
        </Slot>
        <Grip $ml={382} />
        <Slot $ml={31}>
          <Snapshot />
        </Slot>
        <Slot $ml={29}>
          <SceneCam />
        </Slot>
        <Slot $ml={28}>
          <SceneStack />
        </Slot>
        <Grip $ml={191} />
        <Slot $ml={26}>
          <LayoutIcon />
        </Slot>
      </Toolbar>

      <Toolbar $h={100}>
        <Grip />
        <ToolButton $ml={8}>
          <Markup kind="points" plus />
        </ToolButton>
        <ToolButton>
          <Markup kind="line" plus />
        </ToolButton>
        <ToolButton>
          <Markup kind="angle" plus />
        </ToolButton>
        <ToolButton>
          <Markup kind="curve" plus />
        </ToolButton>
        <ToolButton>
          <Markup kind="closed" plus />
        </ToolButton>
        <ToolButton>
          <Markup kind="plane" plus />
        </ToolButton>
        <ToolButton>
          <Markup kind="roi" plus />
        </ToolButton>
        <Combo $w={431} $h={82} $ml={2} $pad={12}>
          CC
          <Tri />
        </Combo>
        <ToolButton $w={61} $h={81}>
          <ColorChip />
        </ToolButton>
        <ToolButton $w={82} $h={81} $ml={10}>
          <ArrowLoop />
        </ToolButton>
        <ToolButton $w={28} $h={81} $ml={3}>
          <Tri />
        </ToolButton>
        <ToolButton $w={82} $h={81} $ml={10}>
          <Trash />
        </ToolButton>
        <ToolButton $w={29} $h={81} $ml={3}>
          <Tri />
        </ToolButton>
        <ToolButton $w={82} $h={81} $ml={10}>
          <Dots />
          <ButtonCornerTri $size={7} />
        </ToolButton>
        <Separator />
        <ToolButton $ml={13}>
          <Fiducials />
        </ToolButton>
        <ToolButton $w={92}>
          <EditTable />
        </ToolButton>
      </Toolbar>

      <Body>
        <Panel>
          <LogoRow>
            <SlicerLogo size={72} />
            3D Slicer
          </LogoRow>
          <ScrollWrap>
            <PanelContent>
              <ButtonBox>
                {CREATE_BUTTONS.map((b) => (
                  <CreateButton key={b.label}>
                    <Markup kind={b.kind} plus />
                    {b.label}
                  </CreateButton>
                ))}
              </ButtonBox>

              <Tree>
                <TreeHead>
                  <HeadCell>Node</HeadCell>
                  <HeadCell>Description</HeadCell>
                  <HeadCell $center>
                    <HeadEye />
                  </HeadCell>
                  <HeadCell $center $pr={12}>
                    <ColorGrid />
                  </HeadCell>
                </TreeHead>
                {NODES_LIST.map((n) => (
                  <NodeRow key={n.name} $on={n.on}>
                    <NodeName>
                      <NodeIcon>
                        {n.kind === "fid" ? <Fiducials w={34} h={34} /> : <Markup kind={n.kind} size={36} />}
                      </NodeIcon>
                      {n.name}
                    </NodeName>
                    <NodeDesc>{n.desc}</NodeDesc>
                    <EyeCell>
                      <Eye open={n.on} />
                    </EyeCell>
                    <Swatch $color={n.color} />
                  </NodeRow>
                ))}
              </Tree>
              <SplitHandle />

              <SectionHead>
                <ArrowSlot>
                  <Tri $dir="right" $size={10} />
                </ArrowSlot>
                Display
              </SectionHead>
              <SectionHead $mt={47}>
                <ArrowSlot>
                  <Tri $dir="right" $size={10} />
                </ArrowSlot>
                Control Points
              </SectionHead>
              <SectionHead $mt={45}>
                <ArrowSlot>
                  <Tri />
                </ArrowSlot>
                Measurements
              </SectionHead>
              <MeasureBody>
                <MeasureLines>
                  length: 262.3mm
                  <br />
                  curvature mean: 0.030 mm-1
                  <br />
                  curvature max: 0.189 mm-1
                  <br />
                  area: 28.54cm2
                </MeasureLines>
                <SubHead>
                  <ArrowSlot $w={60}>
                    <Tri />
                  </ArrowSlot>
                  Measurement settings
                </SubHead>
                <SettingsBox>
                  <Table>
                    <TableHead>
                      <TableHeadCell>Name</TableHeadCell>
                      <TableHeadCell>Enabled</TableHeadCell>
                    </TableHead>
                    {["length", "curvature mean", "curvature max"].map((m) => (
                      <TableRow key={m}>
                        {m}
                        <CheckBox>
                          <Check />
                        </CheckBox>
                      </TableRow>
                    ))}
                  </Table>
                  <MiniBar>
                    <BarButton $h={34}>
                      <UpTri $size={9} />
                    </BarButton>
                    <BarButton $h={70} />
                    <MiniThumb />
                    <BarButton $h={37}>
                      <Tri $size={9} />
                    </BarButton>
                  </MiniBar>
                </SettingsBox>
              </MeasureBody>

              <SectionHead>
                <ArrowSlot>
                  <Tri $dir="right" $size={10} />
                </ArrowSlot>
                Export/import Table
              </SectionHead>
              <SectionHead $mt={47}>
                <ArrowSlot>
                  <Tri />
                </ArrowSlot>
                Curve Settings
              </SectionHead>

              <FormGrid $mt={37} $ml={42} $col={258} $w={1500}>
                <span>Curve Type:</span>
                <Combo>
                  Spline
                  <Tri $size={9} />
                </Combo>
                <span>Constrain to Model:</span>
                <Combo>
                  None
                  <Tri $size={9} />
                </Combo>
              </FormGrid>

              <SubHead $ml={45} $off $mt={10}>
                <ArrowSlot $w={44}>
                  <Tri $size={9} $color="#c8c8c8" />
                </ArrowSlot>
                Surface
              </SubHead>
              <SurfaceBox>
                <SurfaceRow>
                  <SurfaceLabel>Cost function:</SurfaceLabel>
                  <Combo $w={1080} $off>
                    Distance
                    <Tri $size={9} $color="#d0d0d0" />
                  </Combo>
                </SurfaceRow>
                <SurfaceRow $h={60}>
                  <WeightLabel>Distance weighting function:</WeightLabel>
                  distance
                </SurfaceRow>
              </SurfaceBox>
              <AdvancedRow $ml={45} $w={1497}>
                <ArrowSlot $w={44}>
                  <Tri $dir="right" $size={10} />
                </ArrowSlot>
                Advanced
              </AdvancedRow>
            </PanelContent>
            <MainBar>
              <BarButton $h={37}>
                <UpTri $size={9} />
              </BarButton>
              <MainThumb />
              <MainBarGap />
              <MainBarEnd />
            </MainBar>
            <SplitStrip />
          </ScrollWrap>
        </Panel>

        <Viewer>
          <ViewerBar>
            <PinBox>
              <Pin />
            </PinBox>
            <ViewNumber>1</ViewNumber>
            <ViewIcon $ml={8} $w={34} $tint>
              <Crosshair />
            </ViewIcon>
            <ViewIcon $ml={15} $w={26}>
              <Quad />
            </ViewIcon>
          </ViewerBar>
          <CurveScene />
          <SceneLabel>
            CC:
            <br />
            length: 262.3mm
            <br />
            curvature mean: 0.030 mm-1
            <br />
            curvature max: 0.189 mm-1
            <br />
            area: 28.54cm2
          </SceneLabel>
        </Viewer>
      </Body>

      <Callout />
      <CalloutArrow width="3915" height="2475" viewBox="0 0 3915 2475">
        <polygon points="1588,1532 2073,1290 2073,1310 1588,1552" fill="#ff0000" />
        <polygon points="2111,1281 2065,1280 2082,1319" fill="#ff0000" />
      </CalloutArrow>
    </Page>
  );
}
